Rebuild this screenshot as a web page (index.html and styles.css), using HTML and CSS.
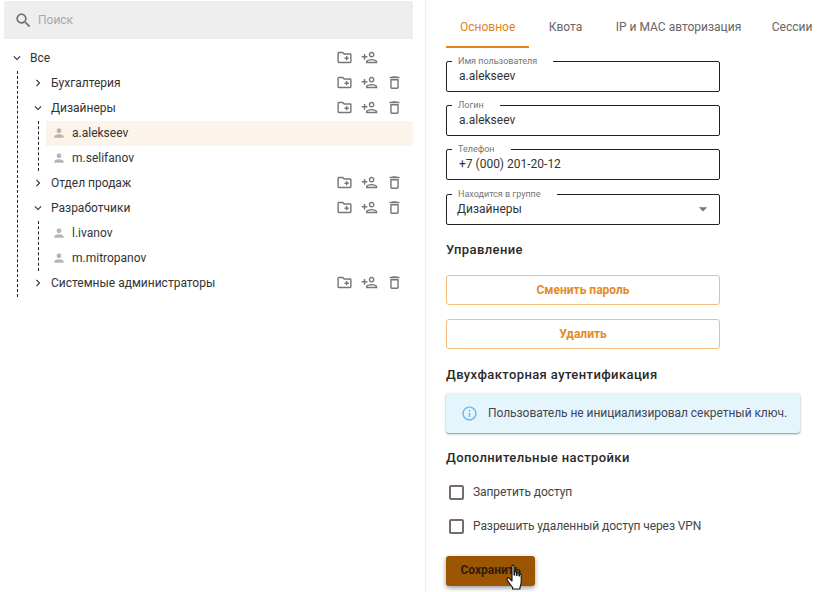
FILE: index.html
```html
<!DOCTYPE html>
<html>
	<head>
		<meta charset="utf-8">
		<title>Пользователи</title>
		<link rel="stylesheet" href="styles.css">
	</head>
	<body>
		<svg class="defs" width="0" height="0">
			<symbol id="i-folder" viewBox="0 0 24 24"><path d="M20 6h-8l-2-2H4c-1.11 0-1.99.89-1.99 2L2 18c0 1.11.89 2 2 2h16c1.11 0 2-.89 2-2V8c0-1.11-.89-2-2-2zm0 12H4V6h5.17l2 2H20v10zm-8-4h2v2h2v-2h2v-2h-2v-2h-2v2h-2z"/></symbol>
			<symbol id="i-add" viewBox="0 0 24 24"><path d="M15 12c2.21 0 4-1.79 4-4s-1.79-4-4-4-4 1.79-4 4 1.79 4 4 4zm0-6c1.1 0 2 .9 2 2s-.9 2-2 2-2-.9-2-2 .9-2 2-2zm0 8c-2.67 0-8 1.34-8 4v2h16v-2c0-2.66-5.33-4-8-4zm-6 4c.22-.72 3.31-2 6-2 2.7 0 5.8 1.29 6 2H9zm-3-3v-3h3v-2H6V7H4v3H1v2h3v3z"/></symbol>
			<symbol id="i-trash" viewBox="0 0 24 24"><path d="M16 9v10H8V9h8m-1.5-6h-5l-1 1H5v2h14V4h-3.5l-1-1zM18 7H6v12c0 1.1.9 2 2 2h8c1.1 0 2-.9 2-2V7z"/></symbol>
			<symbol id="i-person" viewBox="0 0 24 24"><path d="M12 12c2.21 0 4-1.79 4-4s-1.79-4-4-4-4 1.79-4 4 1.79 4 4 4zm0 2c-2.67 0-8 1.34-8 4v2h16v-2c0-2.66-5.33-4-8-4z"/></symbol>
			<symbol id="i-down" viewBox="0 0 24 24"><path d="M16.59 8.59L12 13.17 7.41 8.59 6 10l6 6 6-6z"/></symbol>
			<symbol id="i-right" viewBox="0 0 24 24"><path d="M10 6L8.59 7.41 13.17 12l-4.58 4.59L10 18l6-6z"/></symbol>
		</svg>

		<div class="page">
			<div class="left">
				<div class="search">
					<svg class="search-icon" viewBox="0 0 24 24"><path d="M15.5 14h-.79l-.28-.27C15.41 12.59 16 11.11 16 9.5 16 5.91 13.09 3 9.5 3S3 5.91 3 9.5 5.91 16 9.5 16c1.61 0 3.09-.59 4.23-1.57l.27.28v.79l5 4.99L20.49 19l-4.99-5zm-6 0C7.01 14 5 11.99 5 9.5S7.01 5 9.5 5 14 7.01 14 9.5 11.99 14 9.5 14z"/></svg>
					<span>Поиск</span>
				</div>

				<div class="tree">
					<div class="row root-row">
						<svg class="chev"><use href="#i-down"/></svg>
						<span class="name">Все</span>
						<span class="actions">
							<svg class="act"><use href="#i-folder"/></svg>
							<svg class="act"><use href="#i-add"/></svg>
							<span class="act"></span>
						</span>
					</div>
					<div class="branch">
						<div class="row">
							<svg class="chev"><use href="#i-right"/></svg>
							<span class="name">Бухгалтерия</span>
							<span class="actions">
								<svg class="act"><use href="#i-folder"/></svg>
								<svg class="act"><use href="#i-add"/></svg>
								<svg class="act"><use href="#i-trash"/></svg>
							</span>
						</div>
						<div class="row">
							<svg class="chev"><use href="#i-down"/></svg>
							<span class="name">Дизайнеры</span>
							<span class="actions">
								<svg class="act"><use href="#i-folder"/></svg>
								<svg class="act"><use href="#i-add"/></svg>
								<svg class="act"><use href="#i-trash"/></svg>
							</span>
						</div>
						<div class="users">
							<div class="user selected">
								<svg class="person"><use href="#i-person"/></svg>
								<span>a.alekseev</span>
							</div>
							<div class="user">
								<svg class="person"><use href="#i-person"/></svg>
								<span>m.selifanov</span>
							</div>
						</div>
						<div class="row">
							<svg class="chev"><use href="#i-right"/></svg>
							<span class="name">Отдел продаж</span>
							<span class="actions">
								<svg class="act"><use href="#i-folder"/></svg>
								<svg class="act"><use href="#i-add"/></svg>
								<svg class="act"><use href="#i-trash"/></svg>
							</span>
						</div>
						<div class="row">
							<svg class="chev"><use href="#i-down"/></svg>
							<span class="name">Разработчики</span>
							<span class="actions">
								<svg class="act"><use href="#i-folder"/></svg>
								<svg class="act"><use href="#i-add"/></svg>
								<svg class="act"><use href="#i-trash"/></svg>
							</span>
						</div>
						<div class="users">
							<div class="user">
								<svg class="person"><use href="#i-person"/></svg>
								<span>l.ivanov</span>
							</div>
							<div class="user">
								<svg class="person"><use href="#i-person"/></svg>
								<span>m.mitropanov</span>
							</div>
						</div>
						<div class="row">
							<svg class="chev"><use href="#i-right"/></svg>
							<span class="name">Системные администраторы</span>
							<span class="actions">
								<svg class="act"><use href="#i-folder"/></svg>
								<svg class="act"><use href="#i-add"/></svg>
								<svg class="act"><use href="#i-trash"/></svg>
							</span>
						</div>
					</div>
				</div>
			</div>

			<div class="right">
				<div class="tabs">
					<div class="tab active">Основное</div>
					<div class="tab">Квота</div>
					<div class="tab">IP и MAC авторизация</div>
					<div class="tab tab-last">Сессии</div>
				</div>

				<div class="field">
					<span class="field-label">Имя пользователя</span>
					a.alekseev
				</div>
				<div class="field">
					<span class="field-label">Логин</span>
					a.alekseev
				</div>
				<div class="field">
					<span class="field-label">Телефон</span>
					+7 (000) 201-20-12
				</div>
				<div class="field field-select">
					<span class="field-label">Находится в группе</span>
					Дизайнеры
					<svg class="arrow" viewBox="0 0 24 24"><path d="M7 10l5 5 5-5z"/></svg>
				</div>

				<h4 class="heading heading-manage">Управление</h4>
				<div class="btn">Сменить пароль</div>
				<div class="btn">Удалить</div>

				<h4 class="heading heading-two">Двухфакторная аутентификация</h4>
				<div class="info">
					<svg class="info-icon" viewBox="0 0 24 24"><path d="M11 7h2v2h-2zm0 4h2v6h-2zm1-9C6.48 2 2 6.48 2 12s4.48 10 10 10 10-4.48 10-10S17.52 2 12 2zm0 18c-4.41 0-8-3.59-8-8s3.59-8 8-8 8 3.59 8 8-3.59 8-8 8z"/></svg>
					<span>Пользователь не инициализировал секретный ключ.</span>
				</div>

				<h4 class="heading heading-extra">Дополнительные настройки</h4>
				<div class="check"><span class="box"></span>Запретить доступ</div>
				<div class="check"><span class="box"></span>Разрешить удаленный доступ через VPN</div>

				<div class="save">
					Сохранить
					<svg class="cursor" viewBox="0 0 17 26"><path d="M6 2c0-1.3 2-1.3 2 0v9l.6.1V8.4c0-1.2 1.9-1.2 1.9 0v3l.6.1V9.6c0-1.2 1.9-1.2 1.9 0v2.3l.5.1v-1c0-1.2 1.7-1.2 1.7 0v6.5c0 3-.6 4.4-1.2 5.5v2H6.600v-1.700C5 21.500 3.800 19.800 2.600 18 1.600 16.500.6 15.500 1 14.500c.5-1.100 2-.6 2.900.4L6 17z" fill="#fff" stroke="#111" stroke-width="1.100" stroke-linejoin="round"/></svg>
				</div>
			</div>
		</div>
	</body>
</html>
```

FILE: styles.css
```css
html, body
{
	margin: 0;
	height: 100%;
	overflow: hidden;
	background-color: white;
	font-family: Roboto, sans-serif;
	color: #333333;
}

.defs
{
	position: absolute;
}

.page
{
	display: flex;
	height: 592px;
}

/* left side: search and tree */

.left
{
	flex: none;
	width: 409px;
	margin-left: 4px;
	padding-top: 1px;
}

.search
{
	display: flex;
	align-items: center;
	height: 38px;
	padding-left: 10px;
	background-color: #eeeeee;
	border-radius: 2px 2px 0 0;
	font-size: 12px;
	color: #a8a8a8;
}

.search-icon
{
	width: 19px;
	height: 19px;
	margin-right: 5px;
	fill: #6f6f6f;
}

.tree
{
	margin-top: 7px;
	font-size: 12px;
}

.row
{
	display: flex;
	align-items: center;
	box-sizing: border-box;
	height: 25px;
	padding-left: 13px;
	padding-bottom: 2px;
}

.root-row
{
	padding-left: 6px;
}

.chev
{
	width: 14px;
	height: 14px;
	margin-right: 6px;
	fill: #333333;
}

.name
{
	flex: 1;
}

.actions
{
	display: flex;
	align-items: center;
	gap: 8px;
	margin-right: 10px;
}

.act
{
	width: 17px;
	height: 17px;
	fill: #777777;
}

.branch
{
	margin-left: 13px;
	padding-bottom: 1px;
	border-left: 1px dashed #222222;
}

.users
{
	margin-left: 20px;
	padding-left: 7px;
	border-left: 1px dashed #222222;
}

.user
{
	display: flex;
	align-items: center;
	box-sizing: border-box;
	height: 25px;
	padding-left: 6px;
	padding-bottom: 2px;
}

.selected
{
	background-color: #fcf3ea;
}

.person
{
	width: 14px;
	height: 14px;
	margin-right: 6px;
	fill: #bcb2b8;
}

/* right side: user form */

.right
{
	flex: 1;
	margin-left: 12px;
	border-left: 1px solid #eeeeee;
	padding-left: 20px;
	font-size: 12px;
}

.tabs
{
	display: flex;
	gap: 5.5px;
	height: 48px;
	margin-bottom: 13px;
}

.tab
{
	height: 46px;
	padding: 0 14px;
	line-height: 55px;
	color: #666666;
	white-space: nowrap;
}

.tab-last
{
	margin-left: -3px;
}

.active
{
	color: #e0851c;
	border-bottom: 2px solid #e0851c;
}

.field
{
	position: relative;
	display: flex;
	align-items: center;
	box-sizing: border-box;
	width: 274px;
	height: 31px;
	margin-bottom: 13px;
	padding: 0 12px 2px;
	border: 1px solid #222222;
	border-radius: 2px;
	font-size: 12px;
}

.field-label
{
	position: absolute;
	left: 5px;
	top: -6px;
	padding: 0 16px 0 6px;
	background-color: white;
	font-size: 9px;
	line-height: 10px;
	color: #777777;
}

.field-select
{
	justify-content: space-between;
	margin-top: 14px;
	padding-left: 10px;
	padding-right: 6px;
}

.arrow
{
	width: 20px;
	height: 20px;
	fill: #757575;
}

.heading
{
	margin: 0;
	font-size: 13px;
	font-weight: 500;
	letter-spacing: 0.4px;
	line-height: 16px;
	color: #2a2a2a;
}

.heading-manage
{
	margin-top: 17px;
	margin-bottom: 17px;
}

.heading-two
{
	margin-top: 18px;
	margin-bottom: 10px;
}

.heading-extra
{
	margin-top: 17px;
	margin-bottom: 18px;
}

.btn
{
	box-sizing: border-box;
	width: 274px;
	height: 30px;
	margin-bottom: 14px;
	border: 1px solid #f6bd7c;
	border-radius: 3px;
	text-align: center;
	line-height: 28px;
	font-weight: 700;
	color: #e58a26;
}

.info
{
	display: flex;
	align-items: center;
	width: 354px;
	height: 40px;
	box-sizing: border-box;
	padding-left: 15px;
	background-color: #e5f5fc;
	border-radius: 3px;
	box-shadow: 0 1px 2px rgba(0, 0, 0, 0.45);
	letter-spacing: -0.05px;
	color: #444455;
}

.info-icon
{
	width: 17px;
	height: 17px;
	margin-right: 10px;
	fill: #63b6f0;
}

.check
{
	display: flex;
	align-items: center;
	height: 16px;
	margin-bottom: 18px;
	padding-left: 3px;
	letter-spacing: -0.08px;
	color: #444444;
}

.box
{
	box-sizing: border-box;
	width: 15px;
	height: 15px;
	margin-right: 9px;
	border: 2px solid #756a6e;
	border-radius: 2px;
}

.save
{
	position: relative;
	width: 89px;
	height: 30px;
	margin-top: 22px;
	background-color: #9c5500;
	border-radius: 3px;
	box-shadow: 0 2px 5px rgba(0, 0, 0, 0.4);
	text-align: center;
	line-height: 28px;
	font-weight: 700;
	color: #2e1c12;
}

.cursor
{
	position: absolute;
	left: 60px;
	top: 8px;
	width: 17px;
	height: 26px;
}
```
